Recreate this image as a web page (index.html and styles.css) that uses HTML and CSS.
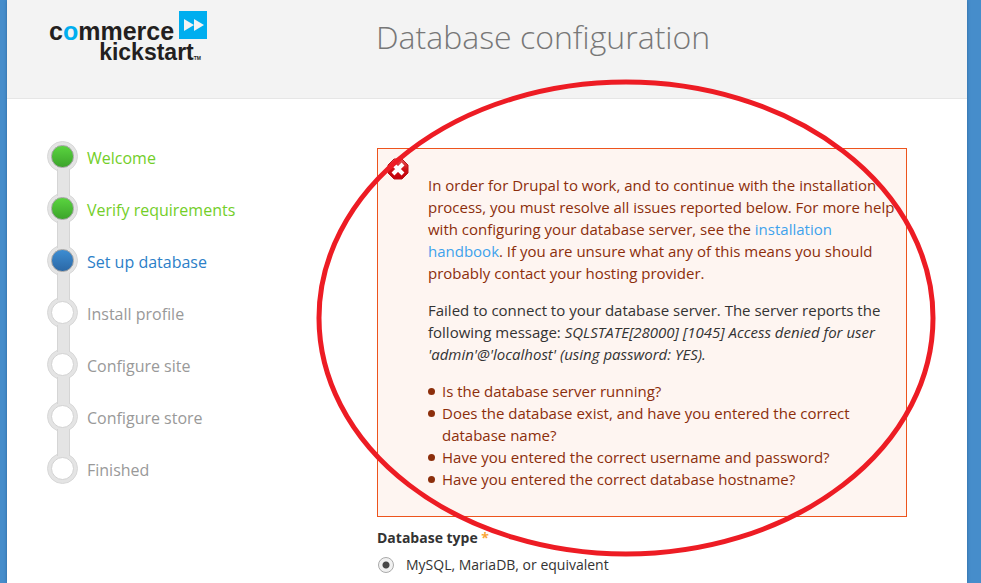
FILE: index.html
```html
<!DOCTYPE html>
<html lang="en">
<head>
<meta charset="utf-8">
<title>Database configuration</title>
<link rel="stylesheet" href="styles.css">
</head>
<body>
<div class="page">
  <header class="header">
    <div class="logo">
      <div class="logo-top">
        <span class="logo-commerce">c<span class="logo-o">o</span>mmerce</span>
        <svg class="logo-mark" width="28" height="28" viewBox="0 0 28 28" aria-hidden="true">
          <rect width="28" height="28" fill="#00aeef"/>
          <path d="M5 8l10 6-10 6zM15 8l10 6-10 6z" fill="#f3f3f3"/>
        </svg>
      </div>
      <div class="logo-bottom"><span class="logo-kickstart">kickstart</span><span class="logo-tm">TM</span></div>
    </div>
    <h1 class="title">Database configuration</h1>
  </header>
  <div class="body">
    <ol class="steps">
      <li class="step done"><span class="dot"></span>Welcome</li>
      <li class="step done"><span class="dot"></span>Verify requirements</li>
      <li class="step active"><span class="dot"></span>Set up database</li>
      <li class="step"><span class="dot"></span>Install profile</li>
      <li class="step"><span class="dot"></span>Configure site</li>
      <li class="step"><span class="dot"></span>Configure store</li>
      <li class="step"><span class="dot"></span>Finished</li>
    </ol>
    <main class="content">
      <div class="error">
        <svg class="error-icon" width="22" height="22" viewBox="0 0 22 22" aria-hidden="true">
          <defs><linearGradient id="red" x1="0" y1="0" x2="0" y2="1"><stop offset="0" stop-color="#e8595b"/><stop offset=".5" stop-color="#cf1116"/><stop offset="1" stop-color="#c4000a"/></linearGradient></defs>
          <path d="M7 1h8l6 6v8l-6 6H7l-6-6V7z" fill="url(#red)" stroke="#b9151a"/>
          <path d="M6 6l10 10M16 6l-10 10" stroke="#fff" stroke-width="4"/>
        </svg>
        <div class="error-text">
          <p>In order for Drupal to work, and to continue with the installation process, you must resolve all issues reported below. For more help with configuring your database server, see the <a href="#">installation handbook</a>. If you are unsure what any of this means you should probably contact your hosting provider.</p>
          <p class="report">Failed to connect to your database server. The server reports the following message: <em>SQLSTATE[28000] [1045] Access denied for user 'admin'@'localhost' (using password: YES).</em></p>
          <ul class="checks">
            <li>Is the database server running?</li>
            <li>Does the database exist, and have you entered the correct database name?</li>
            <li>Have you entered the correct username and password?</li>
            <li>Have you entered the correct database hostname?</li>
          </ul>
        </div>
      </div>
      <fieldset class="field">
        <legend>Database type <span class="required">*</span></legend>
        <div class="option">
          <input type="radio" id="mysql" name="driver" checked>
          <label for="mysql">MySQL, MariaDB, or equivalent</label>
        </div>
      </fieldset>
      <svg class="highlight" viewBox="0 0 620 478" aria-hidden="true"><ellipse cx="310" cy="239" rx="307" ry="236" fill="none" stroke="#ed1c24" stroke-width="5"/></svg>
    </main>
  </div>
</div>
</body>
</html>
```
FILE: styles.css
```css
* { box-sizing: border-box; }
body {
  margin: 0;
  padding: 0 14px 0 7px;
  background: #468dcb;
  font: 15px/22px "Open Sans", "Noto Sans", sans-serif;
  color: #333;
}
.page {
  min-height: 100vh;
  background: #fff;
  box-shadow: 0 0 3px #2d659a;
}
.header {
  display: grid;
  grid-template-columns: 327px 1fr;
  height: 99px;
  padding: 11px 60px 0 42px;
  background: #f3f3f3;
  border-bottom: 1px solid #e6e6e6;
}
.logo {
  width: 158px;
  font-family: "Liberation Sans", sans-serif;
  font-weight: bold;
  color: #231f20;
}
.logo-top {
  display: flex;
  justify-content: space-between;
  height: 28px;
}
.logo-commerce { font-size: 25px; line-height: 40px; }
.logo-o { color: #00aeef; }
.logo-bottom {
  display: flex;
  align-items: baseline;
  justify-content: flex-end;
  padding-right: 6px;
}
.logo-kickstart { font-size: 23px; line-height: 26px; }
.logo-tm { font-size: 5px; }
.title {
  margin: 0;
  font-size: 32px;
  line-height: 52px;
  font-weight: 300;
  color: #777;
}
.body {
  display: grid;
  grid-template-columns: 330px minmax(0, 1fr);
  padding: 42px 60px 0 40px;
}
.steps {
  margin: 0;
  padding: 0;
  list-style: none;
  font-size: 16px;
  line-height: 34px;
  color: #999;
}
.step {
  position: relative;
  display: flex;
  align-items: flex-start;
  gap: 9px;
  height: 32px;
  margin-bottom: 20px;
}
.step:not(:last-child)::before {
  content: "";
  position: absolute;
  left: 10px;
  top: 28px;
  z-index: 1;
  width: 11px;
  height: 27px;
  background: #e4e4e4;
  border: solid #d5d5d5;
  border-width: 0 1px;
}
.dot {
  display: grid;
  place-items: center;
  width: 31px;
  height: 31px;
  border: 1px solid #d8d8d8;
  border-radius: 50%;
  background: #e4e4e4;
}
.dot::before {
  content: "";
  width: 21px;
  height: 21px;
  border: 1px solid #d2d2d2;
  border-radius: 50%;
  background: #fff;
}
.done { color: #73ce28; }
.done .dot::before {
  border-color: #a3a3a3;
  background: linear-gradient(#5ad43f, #3ca42b);
}
.active { color: #2c80c8; }
.active .dot::before {
  border-color: #a3a3a3;
  background: linear-gradient(#3d8dd2, #2b68a6);
}
.content {
  position: relative;
  padding-top: 7px;
}
.error {
  display: flex;
  gap: 19px;
  padding: 9px 5px 26px 9px;
  background: #fef5f1;
  border: 1px solid #ed541d;
  color: #8c2e0b;
}
.error-icon { flex: none; }
.error-text { padding-top: 16px; }
.error p { margin: 0 0 15px; }
.error .report { color: #333; }
.error a { color: #3ea2ec; text-decoration: none; }
.checks {
  margin: 0;
  padding: 0;
  list-style: none;
}
.checks li {
  display: flex;
  gap: 7px;
}
.checks li::before {
  content: "";
  flex: none;
  width: 7px;
  height: 7px;
  margin-top: 8px;
  border-radius: 50%;
  background: #8c2e0b;
}
.field {
  margin: 0;
  padding: 0;
  border: 0;
}
.field legend {
  padding: 10px 0 0;
  font-size: 14px;
  font-weight: bold;
}
.required { color: #f9a63a; }
.option {
  display: flex;
  align-items: center;
  gap: 12px;
  margin-top: 5px;
  font-size: 14px;
}
.option input {
  appearance: none;
  width: 16px;
  height: 16px;
  margin: 0 0 0 1px;
  border: 1px solid #aaa;
  border-radius: 50%;
  background: radial-gradient(circle, #484848 3px, #f1f1f1 4px);
}
.highlight {
  position: absolute;
  left: -61px;
  top: -62px;
  width: 620px;
  height: 478px;
  pointer-events: none;
}
```
